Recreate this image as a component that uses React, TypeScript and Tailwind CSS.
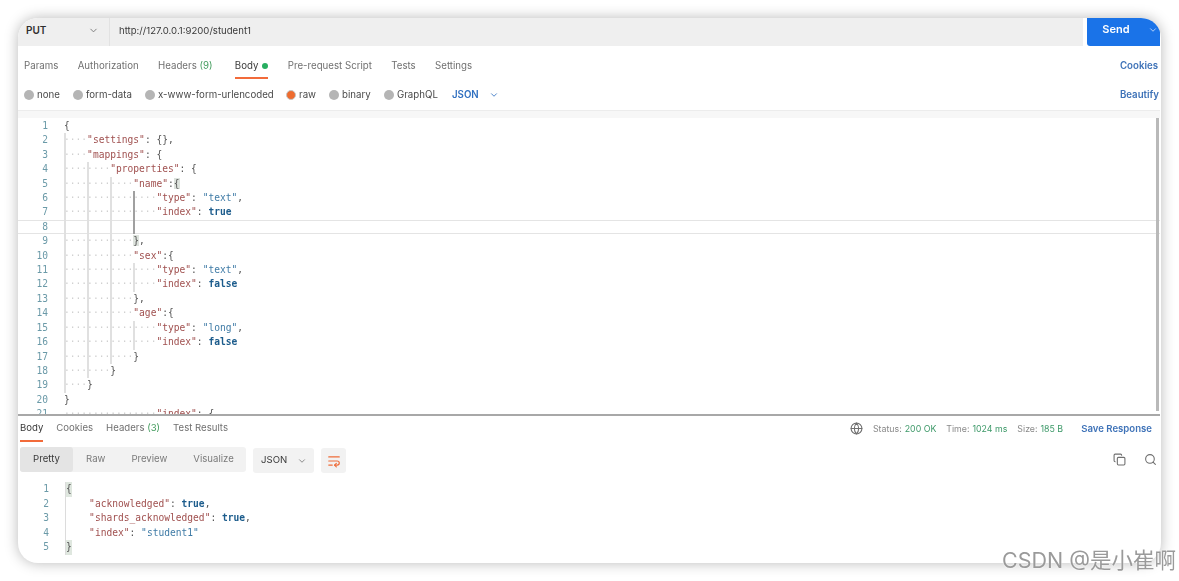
import { ChevronDown, Copy, Globe, Search, WrapText } from 'lucide-react';

type Kind = 'key' | 'str' | 'bool' | 'p' | 'match';
type Tok = [Kind, string];

const key = (s: string): Tok => ['key', s];
const str = (s: string): Tok => ['str', s];
const bool = (s: string): Tok => ['bool', s];
const p = (s: string): Tok => ['p', s];
const match = (s: string): Tok => ['match', s];

const kindClass: Record<Kind, string> = {
    key: 'text-[#a0504f]',
    str: 'text-[#3f7ba6]',
    bool: 'text-[#1c5c8c] font-bold',
    p: 'text-[#555555]',
    match: 'text-[#555555] bg-[#dde3dd]',
};

// indent in chars, guide columns (in chars), tokens
const requestLines: { indent: number; guides: number[]; toks: Tok[] }[] = [
    { indent: 0, guides: [], toks: [p('{')] },
    { indent: 4, guides: [0], toks: [key('"settings"'), p(': {},')] },
    { indent: 4, guides: [0], toks: [key('"mappings"'), p(': {')] },
    { indent: 8, guides: [0, 4], toks: [key('"properties"'), p(': {')] },
    { indent: 12, guides: [0, 4, 8], toks: [key('"name"'), p(':'), match('{')] },
    { indent: 16, guides: [0, 4, 8, 12], toks: [key('"type"'), p(': '), str('"text"'), p(',')] },
    { indent: 16, guides: [0, 4, 8, 12], toks: [key('"index"'), p(': '), bool('true')] },
    { indent: 0, guides: [0, 4, 8, 12], toks: [] },
    { indent: 12, guides: [0, 4, 8], toks: [match('}'), p(',')] },
    { indent: 12, guides: [0, 4, 8], toks: [key('"sex"'), p(':{')] },
    { indent: 16, guides: [0, 4, 8, 12], toks: [key('"type"'), p(': '), str('"text"'), p(',')] },
    { indent: 16, guides: [0, 4, 8, 12], toks: [key('"index"'), p(': '), bool('false')] },
    { indent: 12, guides: [0, 4, 8], toks: [p('},')] },
    { indent: 12, guides: [0, 4, 8], toks: [key('"age"'), p(':{')] },
    { indent: 16, guides: [0, 4, 8, 12], toks: [key('"type"'), p(': '), str('"long"'), p(',')] },
    { indent: 16, guides: [0, 4, 8, 12], toks: [key('"index"'), p(': '), bool('false')] },
    { indent: 12, guides: [0, 4, 8], toks: [p('}')] },
    { indent: 8, guides: [0, 4], toks: [p('}')] },
    { indent: 4, guides: [0], toks: [p('}')] },
    { indent: 0, guides: [], toks: [p('}')] },
    { indent: 16, guides: [], toks: [key('"index"'), p(': {')] },
];

const responseLines: { text: Tok[]; bracket?: boolean }[] = [
    { text: [p('{')], bracket: true },
    { text: [p('    '), key('"acknowledged"'), p(': '), bool('true'), p(',')] },
    { text: [p('    '), key('"shards_acknowledged"'), p(': '), bool('true'), p(',')] },
    { text: [p('    '), key('"index"'), p(': '), str('"student1"')] },
    { text: [p('}')], bracket: true },
];

const reqTabs = ['Params', 'Authorization'];
const reqTabsAfter = ['Pre-request Script', 'Tests', 'Settings'];
const bodyTypes = [
    { label: 'none', w: 'w-[49px]' },
    { label: 'form-data', w: 'w-[72px]' },
    { label: 'x-www-form-urlencoded', w: 'w-[141px]' },
    { label: 'raw', w: 'w-[43px]', active: true },
    { label: 'binary', w: 'w-[55px]' },
    { label: 'GraphQL', w: 'w-[59px]' },
];

function Code({ toks }: { toks: Tok[] }) {
    return (
        <>
            {toks.map(([kind, text], i) => (
                <span key={i} className={kindClass[kind]}>
                    {text}
                </span>
            ))}
        </>
    );
}

export default function App() {
    return (
        <div className="relative h-[581px] w-[1179px] overflow-hidden bg-white pl-[18px] pt-[18px] font-['Inter',sans-serif]">
            <div className="flex h-[545px] w-[1143px] flex-col overflow-hidden rounded-[20px] bg-white pr-px shadow-[0_0_14px_rgba(0,0,0,0.28)] blur-[0.5px]">
                {/* URL bar */}
                <div className="flex h-[28px] shrink-0">
                    <div className="flex flex-1 items-center bg-[#efefef]">
                        <div className="flex h-full w-[92px] items-center justify-between border-r border-[#e2e2e2] pb-[3px] pl-[8px] pr-[10px]">
                            <span className="text-[10px] font-semibold text-[#2f2f2f]">PUT</span>
                            <ChevronDown className="h-[11px] w-[11px] text-[#777777]" />
                        </div>
                        <span className="pb-[2px] pl-[9px] text-[9.6px] text-[#3a3a3a]">http://127.0.0.1:9200/student1</span>
                    </div>
                    <div className="ml-[4px] flex w-[73px] items-center rounded-bl-[3px] bg-[#1a73e8] pb-[5px]">
                        <span className="flex-1 pr-[3px] text-center text-[11px] font-semibold text-white">Send</span>
                        <ChevronDown className="mr-[2px] h-[10px] w-[10px] text-[#cfe2fb]" />
                    </div>
                </div>

                {/* Request tabs */}
                <div className="flex h-[34px] shrink-0 items-start justify-between pl-[6px] pr-[2px] pt-[14px] text-[9.7px] leading-[12px] text-[#707070]">
                    <div className="flex gap-[19.3px]">
                        {reqTabs.map((t) => (
                            <span key={t}>{t}</span>
                        ))}
                        <span>
                            Headers <span className="text-[#3f9a5a]">(9)</span>
                        </span>
                        <span className="relative ml-[3px] flex items-center gap-[4px] text-[#3a3a3a]">
                            Body
                            <span className="h-[6px] w-[6px] rounded-full bg-[#27ae60]" />
                            <span className="absolute left-0 right-0 top-[17px] h-[2px] bg-[#f26b3a]" />
                        </span>
                        {reqTabsAfter.map((t) => (
                            <span key={t}>{t}</span>
                        ))}
                    </div>
                    <span className="font-semibold text-[#3f73b8]">Cookies</span>
                </div>

                {/* Body type */}
                <div className="flex h-[31px] shrink-0 items-start border-b border-[#ececec] pl-[6px] pr-px pt-[9px] text-[9.7px] leading-[12px] text-[#4a4a4a]">
                    {bodyTypes.map((b) => (
                        <div key={b.label} className={`flex items-center gap-[3px] ${b.w}`}>
                            <span
                                className={`h-[10px] w-[10px] shrink-0 rounded-full ${b.active ? 'border border-[#c4c4c4] bg-[#ee6c2f]' : 'bg-[#b5b5b5]'}`}
                            />
                            <span className="whitespace-nowrap">{b.label}</span>
                        </div>
                    ))}
                    <span className="ml-[9px] font-semibold text-[#2f6fc0]">JSON</span>
                    <ChevronDown className="ml-[10px] mt-px h-[10px] w-[10px] text-[#2f6fc0]" />
                    <span className="ml-auto font-semibold text-[#3f73b8]">Beautify</span>
                </div>

                {/* Request editor */}
                <div className="relative h-[305px] shrink-0 overflow-hidden border-b-2 border-[#a8a8a8] font-['DejaVu_Sans_Mono',monospace] text-[9.6px] leading-[14.42px]">
                    <div className="mb-px h-[7px] bg-[#f7f7f7]" />
                    {requestLines.map((line, i) => (
                        <div
                            key={i}
                            className={`flex h-[14.42px] ${i === 7 ? 'shadow-[inset_0_1px_0_#e4e4e4,inset_0_-1px_0_#e4e4e4]' : ''}`}
                        >
                            <span className="w-[30px] shrink-0 text-right text-[#6b9aa8]">{i + 1}</span>
                            <div className="relative ml-[16px] whitespace-pre">
                                {line.guides.map((g) => (
                                    <span
                                        key={g}
                                        className={`absolute top-0 h-[14.42px] w-[1.5px] ${g === 0 ? 'left-0' : g === 4 ? 'left-[23px]' : g === 8 ? 'left-[46px]' : 'left-[69px]'} ${g === 12 && i < 8 ? 'bg-[#a0a0a0]' : 'bg-[#e0e0e0]'}`}
                                    />
                                ))}
                                <span className="text-[#cfcfcf]">{'·'.repeat(line.indent)}</span>
                                <Code toks={line.toks} />
                            </div>
                        </div>
                    ))}
                    <div className="absolute bottom-[3px] right-px top-[7px] w-[3px] bg-[#b9b9b9]" />
                </div>

                {/* Response tabs */}
                <div className="flex h-[26px] shrink-0 items-start justify-between pl-[2px] pr-[8px] pt-[6px] text-[9.6px] leading-[12px] text-[#707070]">
                    <div className="flex gap-[13px]">
                        <span className="relative text-[#3a3a3a]">
                            Body
                            <span className="absolute left-0 right-0 top-[18px] h-[2px] bg-[#f26b3a]" />
                        </span>
                        <span>Cookies</span>
                        <span>
                            Headers <span className="text-[#3f9a5a]">(3)</span>
                        </span>
                        <span>Test Results</span>
                    </div>
                    <div className="flex items-center text-[8.8px]">
                        <Globe className="mr-[10px] h-[13px] w-[13px] text-[#6f6f6f]" />
                        <span className="text-[#8a8a8a]">Status:</span>
                        <span className="ml-[3px] text-[#3f9a6a]">200 OK</span>
                        <span className="ml-[10px] text-[#8a8a8a]">Time:</span>
                        <span className="ml-[3px] text-[#3f9a6a]">1024 ms</span>
                        <span className="ml-[10px] text-[#8a8a8a]">Size:</span>
                        <span className="ml-[3px] text-[#3f9a6a]">185 B</span>
                        <span className="ml-[18px] text-[9.6px] font-semibold text-[#3f73b8]">Save Response</span>
                    </div>
                </div>

                {/* Response toolbar */}
                <div className="mt-[5px] flex h-[26px] shrink-0 items-start pl-[2px] pr-[3px]">
                    <div className="flex h-[25px] w-[226px] items-center rounded-[3px] bg-[#f2f2f2] text-[9.6px] text-[#7b7b7b]">
                        <span className="flex h-full w-[53px] items-center justify-center rounded-[3px] bg-[#e4e4e4] text-[#3a3a3a]">
                            Pretty
                        </span>
                        <span className="ml-[13px]">Raw</span>
                        <span className="ml-[26px]">Preview</span>
                        <span className="ml-[26px]">Visualize</span>
                    </div>
                    <div className="ml-[7px] mt-px flex h-[25px] w-[61px] items-center gap-[10px] rounded-[3px] bg-[#f2f2f2] pl-[8px] text-[9.6px] text-[#3a3a3a]">
                        JSON
                        <ChevronDown className="h-[10px] w-[10px] text-[#777777]" />
                    </div>
                    <div className="ml-[7px] mt-px flex h-[25px] w-[25px] items-center justify-center rounded-[3px] bg-[#f2f2f2]">
                        <WrapText className="h-[14px] w-[14px] text-[#ee6c3a]" />
                    </div>
                    <div className="ml-auto flex items-center gap-[18px] pt-[6px]">
                        <Copy className="h-[13px] w-[13px] text-[#6f6f6f]" />
                        <Search className="h-[13px] w-[13px] text-[#6f6f6f]" />
                    </div>
                </div>

                {/* Response body */}
                <div className="pt-[9px] font-['DejaVu_Sans_Mono',monospace] text-[9.6px] leading-[14.5px]">
                    {responseLines.map((line, i) => (
                        <div key={i} className="flex h-[14.5px]">
                            <span className="w-[31px] shrink-0 text-right text-[#6b9aa8]">{i + 1}</span>
                            <div className={`ml-[16px] whitespace-pre border-l border-[#dcdcdc] ${line.bracket ? 'bg-[#dfe7df]' : ''}`}>
                                <Code toks={line.text} />
                            </div>
                        </div>
                    ))}
                </div>
            </div>

            {/* Watermark */}
            <span className="absolute left-[1002px] top-[546px] whitespace-nowrap font-['Inter','Noto_Sans_CJK_SC',sans-serif] text-[21.5px] leading-[28px] text-[#9a9a9a] [text-shadow:0_0_2px_#ffffff]">
                CSDN @是小崔啊
            </span>
        </div>
    );
}
